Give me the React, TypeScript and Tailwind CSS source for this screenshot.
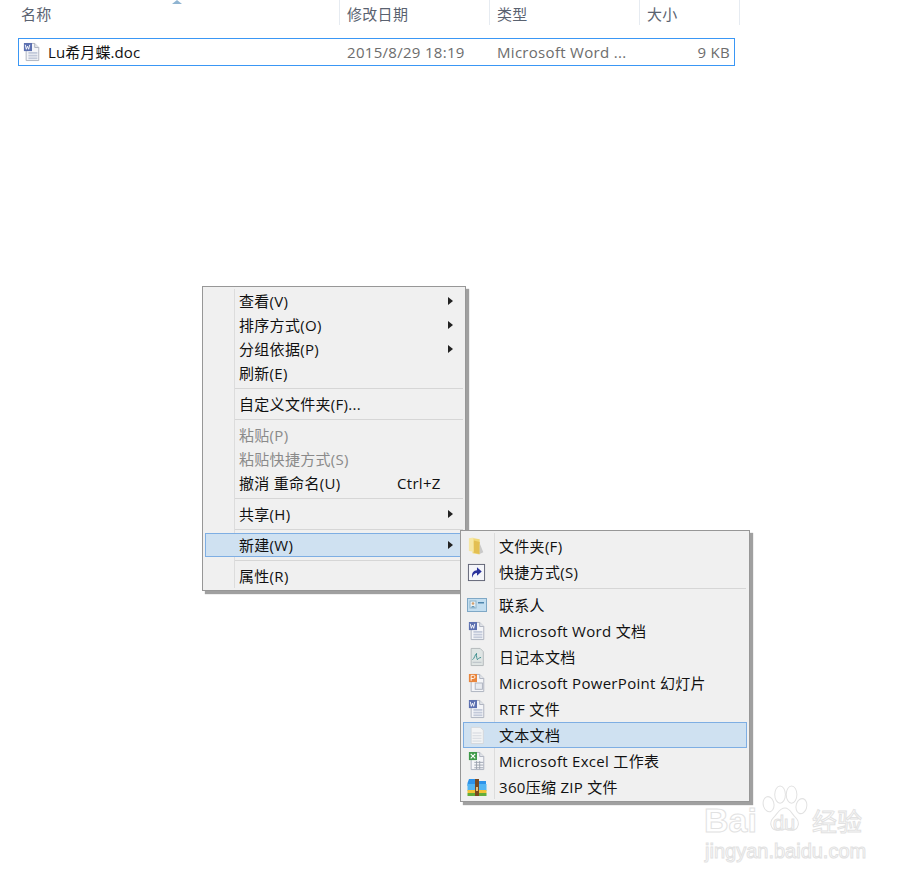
import type { ReactNode } from 'react';

const FONT = "font-['Open_Sans','Noto_Sans_CJK_SC',sans-serif]";

function DocIcon({ children }: { children?: ReactNode }) {
  return (
    <svg width="18" height="20" viewBox="0 0 20 22" className="block">
      <path d="M3.500 1.500h9.500l4.500 4.500v14.500h-14z" fill="#f4f5f8" stroke="#a9afbb" />
      <path d="M13 1.500v4.500h4.500" fill="#e2e5ea" stroke="#a9afbb" />
      {children}
    </svg>
  );
}

const lines = (
  <g fill="#c3cada">
    <rect x="6" y="11" width="10" height="2" />
    <rect x="6" y="14" width="10" height="2" />
    <rect x="6" y="17" width="10" height="2" />
  </g>
);

function WordIcon() {
  return (
    <DocIcon>
      {lines}
      <rect x="1" y="1" width="9" height="9" fill="#5c70b0" />
      <path d="M2.500 3l1.200 5 1.300-3.500L6.300 8l1.200-5" fill="none" stroke="#fff" strokeWidth="1" />
    </DocIcon>
  );
}

function PptIcon() {
  return (
    <DocIcon>
      <rect x="8" y="11" width="8" height="7" fill="#e8ebf0" stroke="#aab0bc" />
      <rect x="1" y="1" width="9" height="9" fill="#e8853c" />
      <path d="M3.500 8.500v-6h2.500a1.500 1.500 0 0 1 0 3.500h-2.500" fill="none" stroke="#fff" />
    </DocIcon>
  );
}

function ExcelIcon() {
  return (
    <DocIcon>
      <path d="M7 12.500h10M7 15.500h10M7 18.500h10M9.500 11v9M13 11v9" stroke="#9aa2ae" fill="none" />
      <rect x="1" y="1" width="9" height="9" fill="#3f9a4a" />
      <path d="M3 3l5 5M8 3l-5 5" stroke="#fff" strokeWidth="1.300" />
    </DocIcon>
  );
}

function JournalIcon() {
  return (
    <svg width="18" height="20" viewBox="0 0 20 22" className="block">
      <path d="M3.500 1.500h10l3.500 3.500v15.500h-13.500z" fill="#dfe5e4" stroke="#b0b6b8" />
      <path d="M5 14c2-1 3-6 4.500-7-.5 3 .5 6 1 7 .5-1 1.500-2 4-2.500" fill="none" stroke="#3f8f8f" strokeWidth="1.100" />
      <path d="M5 17h10" stroke="#c0c7cc" strokeWidth="1.500" />
    </svg>
  );
}

function TextIcon() {
  return (
    <svg width="18" height="20" viewBox="0 0 20 22" className="block">
      <path d="M3.500 2.500h10l3.500 3v15h-13.500z" fill="#f3f4f5" stroke="#d3d6da" />
      <g fill="#dcdfe4">
        <rect x="5" y="8" width="10" height="1.500" />
        <rect x="5" y="11" width="10" height="1.500" />
        <rect x="5" y="14" width="10" height="1.500" />
        <rect x="5" y="17" width="10" height="1.500" />
      </g>
    </svg>
  );
}

function FolderIcon() {
  return (
    <svg width="18" height="20" viewBox="0 0 20 22" className="block">
      <path d="M5 2l8 1.500v17l-8-1.500z" fill="#f0d878" />
      <path d="M1 2.500l5-1 .5 16-5.500-1z" fill="#f6e7a5" />
      <path d="M6.500 5l6.500 1.500V20l-6.500-1.500z" fill="#e3bf52" />
      <path d="M13 8l4 10-4 2z" fill="#c9c9c9" />
    </svg>
  );
}

function ShortcutIcon() {
  return (
    <svg width="19" height="19" viewBox="0 0 20 20" className="block">
      <rect x="1.500" y="1.500" width="17" height="17" fill="#f4f5f9" stroke="#5f6274" />
      <path d="M5.500 15.500c-1-5 1.500-8 5-8V4.500l5 4.500-5 4.500v-3c-2.500 0-4 1.500-5 5z" fill="#27309b" />
    </svg>
  );
}

function ContactIcon() {
  return (
    <svg width="20" height="16" viewBox="0 0 20 16" className="block">
      <rect x="0.500" y="1.500" width="19" height="13" fill="#c3def0" stroke="#7fa8c6" />
      <rect x="3" y="4" width="6" height="7" fill="#e9f2f7" stroke="#8eb3c9" />
      <circle cx="6" cy="6.500" r="1.300" fill="#d3a06f" />
      <path d="M4 10.500c.500-2 3.500-2 4 0z" fill="#5f93b5" />
      <rect x="11" y="5" width="6" height="1.500" fill="#4f86ad" />
    </svg>
  );
}

function ZipIcon() {
  return (
    <svg width="20" height="20" viewBox="0 0 20 20" className="block">
      <path d="M0.500 6l1.500-4h6l1 2h10v5h-18.500z" fill="#2d93ea" />
      <rect x="0.500" y="7" width="19" height="7" fill="#54b5f2" />
      <rect x="0.500" y="13" width="19" height="3" fill="#f2c335" />
      <rect x="0.500" y="16" width="19" height="3" fill="#63ad3a" />
      <rect x="8" y="2" width="4" height="17" fill="#7a4a1f" />
      <rect x="9" y="10" width="2" height="4" fill="#e8c27a" />
    </svg>
  );
}

function Arrow() {
  return <span className="absolute left-[245px] top-1/2 -translate-y-1/2 border-y-[4px] border-l-[5px] border-y-transparent border-l-[#222]" />;
}

function Sep({ x = 'ml-[32px] mr-[2px]' }: { x?: string }) {
  return <div className={`h-px bg-[#d6d6d6] ${x}`} />;
}

function MainItem({ label, sub, disabled, hint, active }: { label: string; sub?: boolean; disabled?: boolean; hint?: string; active?: boolean }) {
  return (
    <div className={`relative flex items-center h-6 pl-[36px] ${disabled ? 'text-[#8a8a8a]' : 'text-[#111]'}`}>
      {active && <div className="absolute left-[2px] right-[2px] top-0 bottom-0 bg-[#cfe1f1] border border-[#7eaee3]" />}
      <span className="relative">{label}</span>
      {hint && <span className="absolute left-[194px]">{hint}</span>}
      {sub && <Arrow />}
    </div>
  );
}

function SubItem({ icon, label, active }: { icon: ReactNode; label: string; active?: boolean }) {
  return (
    <div className="relative flex items-center h-[26px] text-[#111]">
      {active && <div className="absolute left-[2px] right-[2px] top-0 bottom-0 bg-[#cfe1f1] border border-[#7eaee3]" />}
      <div className="relative w-[34px] flex justify-center pr-[3px]">{icon}</div>
      <span className="relative pl-[4px]">{label}</span>
    </div>
  );
}

function Watermark() {
  const outline = 'text-white [-webkit-text-stroke:1px_#e2e2e2] whitespace-nowrap tracking-normal';
  return (
    <div className="absolute left-[704px] top-[784px] w-[170px] h-[82px] font-['Liberation_Sans','Noto_Sans_CJK_SC',sans-serif]">
      <div className={`absolute left-0 top-[19px] text-[34px] leading-none font-bold ${outline}`}>Bai</div>
      <svg width="46" height="48" viewBox="0 0 56 50" preserveAspectRatio="none" className="absolute left-[58px] top-[1px]">
        <g fill="#fff" stroke="#e2e2e2" strokeWidth="1.200">
          <ellipse cx="8" cy="20" rx="6.500" ry="8" transform="rotate(-20 8 20)" />
          <ellipse cx="22" cy="10" rx="6.500" ry="9" />
          <ellipse cx="36" cy="10" rx="6.500" ry="9" />
          <ellipse cx="48" cy="22" rx="6.500" ry="8" transform="rotate(20 48 22)" />
          <path d="M28 24c6 0 8 6 13 10 6 5 3 13-4 13-4 0-6-1-9-1s-6 1-10 1c-7 0-10-8-4-13 5-4 7-10 14-10z" />
        </g>
      </svg>
      <div className={`absolute left-[69px] top-[29px] text-[20px] leading-none ${outline}`}>du</div>
      <div className={`absolute left-[108px] top-[26px] text-[25px] leading-none ${outline}`}>经验</div>
      <div className={`absolute left-[1px] top-[57px] text-[20px] leading-none ${outline}`}>jingyan.baidu.com</div>
    </div>
  );
}

export default function App() {
  return (
    <div className={`relative w-[919px] h-[884px] bg-white overflow-hidden ${FONT} text-[15px] tracking-[0.3px]`}>
      {/* column header */}
      <div className="relative flex h-[25px] text-[#5a6270]">
        <span className="absolute left-[172px] top-0 border-x-[5px] border-b-[4px] border-x-transparent border-b-[#8fb4d1]" />
        <div className="w-[340px] pl-[21px] pt-[3px] border-r border-[#e6ebf1]">名称</div>
        <div className="w-[150px] pl-[7px] pt-[3px] border-r border-[#e6ebf1]">修改日期</div>
        <div className="w-[150px] pl-[7px] pt-[3px] border-r border-[#e6ebf1]">类型</div>
        <div className="w-[100px] pl-[7px] pt-[3px] border-r border-[#e6ebf1]">大小</div>
      </div>

      {/* selected file */}
      <div className="flex items-center ml-[18px] mt-[13px] w-[717px] h-[28px] border border-[#3a97f5] text-[#6d6d6d]">
        <div className="w-[321px] flex items-center pl-[4px] gap-[7px] text-[#111] tracking-[0.1px]">
          <WordIcon />
          <span>Lu希月蝶.doc</span>
        </div>
        <div className="w-[150px] pl-[7px]">2015/8/29 18:19</div>
        <div className="w-[150px] pl-[7px]">Microsoft Word ...</div>
        <div className="flex-1 text-right pr-[4px]">9 KB</div>
      </div>

      {/* main context menu */}
      <div className="absolute left-[202px] top-[286px] w-[264px] h-[305px] bg-[#f0f0f0] border border-[#979797] shadow-[3px_3px_1px_#a0a0a0] pt-[2px]">
        <div className="absolute left-[31px] top-[2px] bottom-[2px] w-px bg-[#dcdcdc]" />
        <MainItem label="查看(V)" sub />
        <MainItem label="排序方式(O)" sub />
        <MainItem label="分组依据(P)" sub />
        <MainItem label="刷新(E)" />
        <div className="h-[7px] flex flex-col justify-center"><Sep /></div>
        <MainItem label="自定义文件夹(F)..." />
        <div className="h-[7px] flex flex-col justify-center"><Sep /></div>
        <MainItem label="粘贴(P)" disabled />
        <MainItem label="粘贴快捷方式(S)" disabled />
        <MainItem label="撤消 重命名(U)" hint="Ctrl+Z" />
        <div className="h-[7px] flex flex-col justify-center"><Sep /></div>
        <MainItem label="共享(H)" sub />
        <div className="h-[7px] flex flex-col justify-center"><Sep /></div>
        <MainItem label="新建(W)" sub active />
        <div className="h-[7px] flex flex-col justify-center"><Sep /></div>
        <MainItem label="属性(R)" />
      </div>

      {/* new submenu */}
      <div className="absolute left-[460px] top-[530px] w-[290px] h-[272px] bg-[#f0f0f0] border border-[#979797] shadow-[3px_3px_1px_#a0a0a0] pt-[2px]">
        <div className="absolute left-[33px] top-[2px] bottom-[2px] w-px bg-[#dcdcdc]" />
        <SubItem icon={<FolderIcon />} label="文件夹(F)" />
        <SubItem icon={<ShortcutIcon />} label="快捷方式(S)" />
        <div className="h-[7px] flex flex-col justify-center"><Sep x="ml-[34px] mr-[3px]" /></div>
        <SubItem icon={<ContactIcon />} label="联系人" />
        <SubItem icon={<WordIcon />} label="Microsoft Word 文档" />
        <SubItem icon={<JournalIcon />} label="日记本文档" />
        <SubItem icon={<PptIcon />} label="Microsoft PowerPoint 幻灯片" />
        <SubItem icon={<WordIcon />} label="RTF 文件" />
        <SubItem icon={<TextIcon />} label="文本文档" active />
        <SubItem icon={<ExcelIcon />} label="Microsoft Excel 工作表" />
        <SubItem icon={<ZipIcon />} label="360压缩 ZIP 文件" />
      </div>

      <Watermark />
    </div>
  );
}
